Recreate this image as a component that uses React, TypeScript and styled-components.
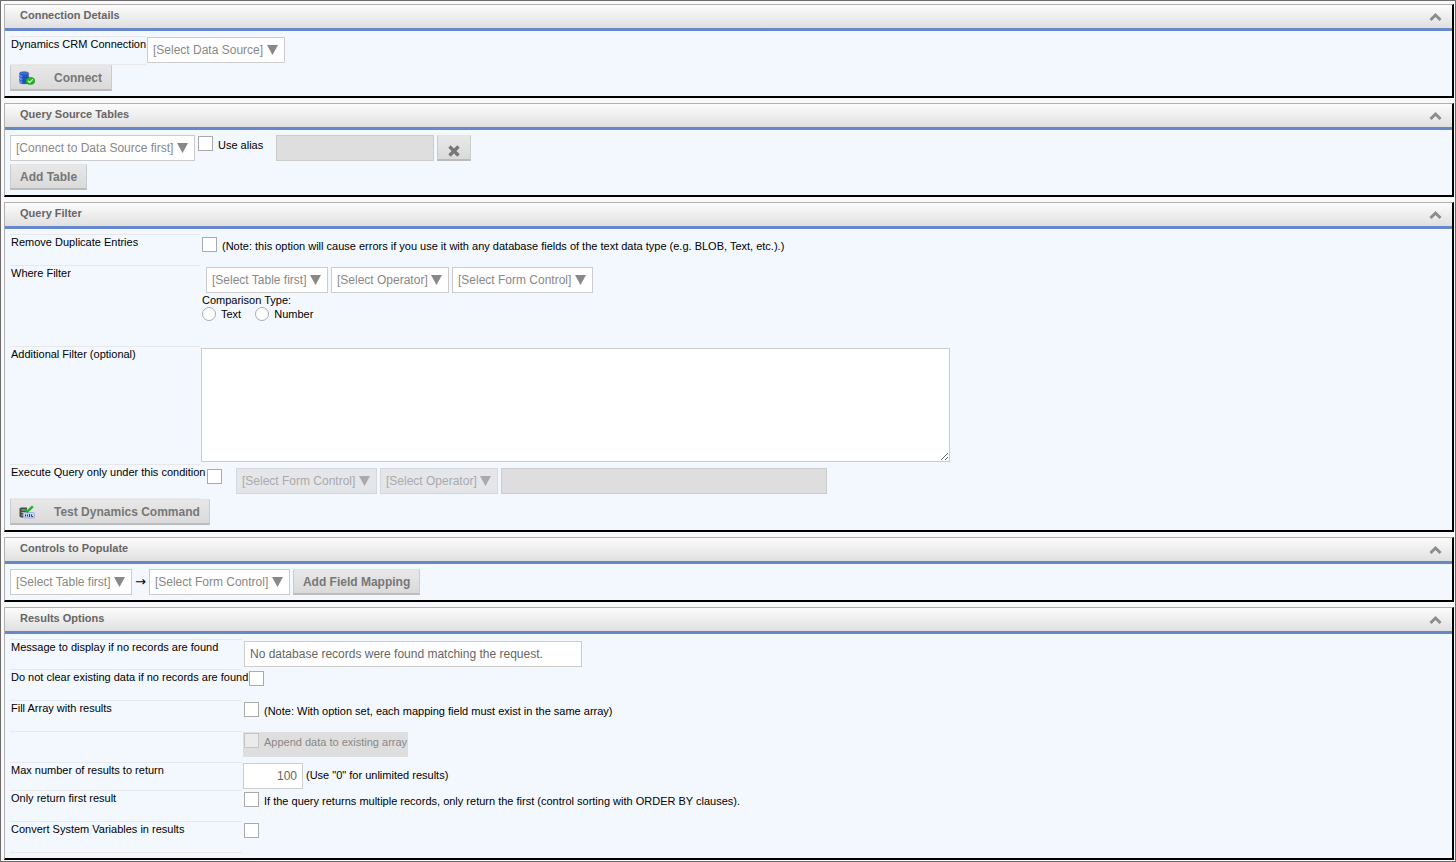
import React, { useState } from "react";
import styled, { createGlobalStyle, css } from "styled-components";

const GlobalStyle = createGlobalStyle`
  *, *::before, *::after { box-sizing: border-box; }
  body {
    margin: 0;
    background: #fafafa;
    color: #000;
    font-family: "Liberation Sans", Arial, Helvetica, sans-serif;
    font-size: 11px;
    line-height: 14px;
  }
`;

const Page = styled.main`
  display: flex;
  flex-direction: column;
  gap: 5px;
  padding: 3px 1px 1px 3px;
  border: 1px solid #6d6a6b;
  background: #fafafa;
`;

const PanelFrame = styled.section`
  border: 1px solid #b0b0b0;
  border-right: 2px solid #000;
  border-bottom: 2px solid #000;
  background: #f3f8ff;
`;

const PanelHeader = styled.header`
  display: flex;
  align-items: center;
  justify-content: space-between;
  height: 26px;
  padding: 0 10px 0 15px;
  border-bottom: 3px solid #6688c8;
  background: linear-gradient(#fcfcfc, #e0e0e0);
`;

const PanelTitle = styled.h2`
  margin: 0 0 3px;
  color: #666;
  font-size: 11px;
  font-weight: bold;
  line-height: 14px;
`;

const CollapseButton = styled.button`
  display: flex;
  margin: 0;
  padding: 0;
  border: 0;
  background: none;
  color: #8c8c8c;
  cursor: pointer;
`;

const PanelBody = styled.div`
  padding: 5px;
`;

const FieldGrid = styled.div<{ $labelWidth: number }>`
  display: grid;
  grid-template-columns: ${(p) => p.$labelWidth}px 1fr;
`;

const labelCell = css`
  padding-left: 1px;
  border-top: 1px solid #e8e8ea;
  white-space: nowrap;
`;

const FieldLabel = styled.label`
  ${labelCell}
`;

const FieldName = styled.div`
  ${labelCell}
`;

const ClosingLine = styled.div`
  border-top: 1px solid #e8e8ea;
`;

const FieldCell = styled.div<{ $height?: number; $inset?: number; $top?: number }>`
  display: flex;
  align-items: flex-start;
  gap: 3px;
  min-height: ${(p) => p.$height ?? 31}px;
  padding: ${(p) => p.$top ?? 2}px 0 0 ${(p) => p.$inset ?? 1}px;
`;

const WhereCell = styled.div`
  min-height: 81px;
  padding: 2px 0 0 2px;
`;

const ControlRow = styled.div<{ $indent?: number }>`
  display: flex;
  gap: 3px;
  padding-left: ${(p) => p.$indent ?? 0}px;
`;

const ButtonRow = styled.div<{ $gap?: number }>`
  display: flex;
  padding-top: ${(p) => p.$gap ?? 0}px;
`;

const SelectFrame = styled.span<{ $disabled?: boolean }>`
  position: relative;
  display: inline-flex;
  flex: none;
  color: ${(p) => (p.$disabled ? "#aaaaaa" : "#888888")};
`;

const SelectInput = styled.select`
  appearance: none;
  height: 26px;
  margin: 0;
  padding: 0 20px 0 5px;
  border: 1px solid #ccc;
  border-radius: 0;
  background: #fff;
  color: inherit;
  font-family: inherit;
  font-size: 12px;
  opacity: 1;

  &:disabled {
    border-color: #d5d8dc;
    background: #e4e6e9;
  }
`;

const SelectArrow = styled.svg`
  position: absolute;
  top: 8px;
  right: 7px;
  pointer-events: none;
`;

const textField = css`
  margin: 0;
  border: 1px solid #ccc;
  border-radius: 0;
  background: #fff;
  color: #666;
  font-family: inherit;
  font-size: 12px;
`;

const TextInput = styled.input<{ $width: number }>`
  ${textField}
  width: ${(p) => p.$width}px;
  max-width: 100%;
  height: 26px;
  padding: 0 5px;

  &:disabled { background: #dedede; }

  &[inputmode="numeric"] { text-align: right; }
`;

const FilterText = styled.textarea`
  ${textField}
  width: 749px;
  max-width: 100%;
  height: 114px;
  padding: 4px 5px;
  resize: both;
`;

const Tick = styled.input`
  appearance: none;
  flex: none;
  width: 15px;
  height: 15px;
  margin: 1px 0 0;
  border: 1px solid #aaa;
  background: #fff;

  &:checked { box-shadow: inset 0 0 0 3px #fff; background: #6688c8; }

  &:disabled { border-color: #c6c6c6; background: #ebebeb; }

  &[type="radio"] {
    width: 14px;
    height: 14px;
    border-radius: 50%;
    margin: 0;
  }
`;

const Hint = styled.label<{ $drop?: number }>`
  padding-top: ${(p) => p.$drop ?? 3}px;
  padding-left: 2px;
  white-space: nowrap;
`;

const AliasHint = styled(Hint)`
  padding-right: 10px;
`;

const InputHint = styled(Hint)`
  padding-left: 0;
`;

const TickGap = styled.span`
  display: flex;
  padding-right: 11px;
`;

const ComparisonSet = styled.fieldset`
  margin: 0;
  padding: 0;
  border: 0;
`;

const ComparisonTitle = styled.legend`
  padding: 0;
`;

const RadioRow = styled.div`
  display: flex;
  align-items: center;
  gap: 14px;
`;

const RadioLabel = styled.label`
  display: flex;
  align-items: center;
  gap: 5px;
`;

const DisabledStrip = styled.div`
  display: flex;
  gap: 3px;
  height: 25px;
  padding: 0 1px;
  background: #dedede;
  color: #888;
`;

const ActionButton = styled.button`
  display: flex;
  align-items: center;
  height: 26px;
  margin: 0;
  padding: 0 9px;
  border: 1px solid #ccc;
  border-top-color: #e4e4e4;
  border-bottom: 2px solid #bbb;
  background: linear-gradient(#e8e8e8, #dadada);
  color: #777;
  font-family: inherit;
  font-size: 12px;
  font-weight: bold;
  line-height: 14px;
  white-space: nowrap;
  cursor: pointer;
`;

const IconButton = styled(ActionButton)`
  gap: 19px;
  padding-left: 8px;
`;

const RemoveButton = styled(ActionButton)`
  padding: 7px 10px 0;
`;

const MapArrow = styled.span`
  padding: 6px 0;
  font-family: "DejaVu Sans", sans-serif;
  font-size: 13px;
`;

function Chevron({ down }: { down: boolean }) {
  return (
    <svg width="13" height="10" viewBox="0 0 13 10" aria-hidden="true">
      <path
        d={down ? "M1.5 2 6.5 7 11.5 2" : "M1.5 8 6.5 3 11.5 8"}
        fill="none"
        stroke="currentColor"
        strokeWidth="3"
      />
    </svg>
  );
}

function CrossIcon() {
  return (
    <svg width="12" height="12" viewBox="0 0 12 12" aria-hidden="true">
      <path d="M2.7 2.7 9.3 9.3M9.3 2.7 2.7 9.3" stroke="#777" strokeWidth="3.4" strokeLinecap="square" />
    </svg>
  );
}

function DatabaseIcon() {
  return (
    <svg width="16" height="16" viewBox="0 0 16 16" aria-hidden="true">
      <path d="M.5 3.5v9c0 1 2 1.7 4.6 1.7s4.6-.7 4.6-1.7v-9z" fill="#2457c4" />
      <path d="M1 3.7v9c.4.5 1.2.8 2.2 1v-9z" fill="#5b90ee" />
      <path d="M.5 6.3c0 1 2 1.6 4.6 1.6s4.6-.6 4.6-1.6M.5 9.5c0 1 2 1.6 4.6 1.6s4.6-.6 4.6-1.6" fill="none" stroke="#1a479f" strokeWidth=".7" />
      <ellipse cx="5.1" cy="3.5" rx="4.6" ry="1.8" fill="#3a6fd6" stroke="#1c46a6" strokeWidth=".6" />
      <ellipse cx="11.3" cy="10.9" rx="4.4" ry="3.4" fill="#25b825" stroke="#0d8f14" strokeWidth=".7" />
      <path d="M8.8 10.8 10.6 12.4 13.8 9.4" fill="none" stroke="#d9ffd2" strokeWidth="1.2" />
    </svg>
  );
}

function TestIcon() {
  return (
    <svg width="16" height="16" viewBox="0 0 16 16" aria-hidden="true">
      <path d="M.5 4.5 2 3.5h6v10H2L.5 12.5z" fill="#4b4b4b" />
      <path d="M2.5 6h4M2.5 8.5h3M2.5 11h3" stroke="#b5b5b5" />
      <rect x="4.5" y="8.5" width="11" height="5.5" rx="1" fill="#c3d0f2" stroke="#a3b3e0" />
      <path d="M6.5 12.5v-2M8.5 10.5v2M10.5 10v3M12.5 10.5v2h1.5" fill="none" stroke="#333a5c" />
      <path d="M6 5.3 8.3 7.6 13.8 2.4" fill="none" stroke="#14b81c" strokeWidth="2.4" />
    </svg>
  );
}

interface PickerProps {
  text: string;
  label: string;
  id?: string;
  disabled?: boolean;
}

function Picker({ text, label, id, disabled }: PickerProps) {
  return (
    <SelectFrame $disabled={disabled}>
      <SelectInput id={id} aria-label={label} disabled={disabled}>
        <option>{text}</option>
      </SelectInput>
      <SelectArrow width="11" height="10" viewBox="0 0 11 10" aria-hidden="true">
        <path d="M0 0h11L5.5 10z" fill="currentColor" />
      </SelectArrow>
    </SelectFrame>
  );
}

function Panel({ title, children }: { title: string; children: React.ReactNode }) {
  const [open, setOpen] = useState(true);
  return (
    <PanelFrame>
      <PanelHeader>
        <PanelTitle>{title}</PanelTitle>
        <CollapseButton
          type="button"
          aria-label={`Toggle ${title}`}
          aria-expanded={open}
          onClick={() => setOpen(!open)}
        >
          <Chevron down={!open} />
        </CollapseButton>
      </PanelHeader>
      {open && <PanelBody>{children}</PanelBody>}
    </PanelFrame>
  );
}

export default function App() {
  return (
    <>
      <GlobalStyle />
      <Page>
        <Panel title="Connection Details">
          <FieldGrid $labelWidth={136}>
            <FieldLabel htmlFor="connection">Dynamics CRM Connection</FieldLabel>
            <FieldCell $height={28} $top={1}>
              <Picker id="connection" label="Dynamics CRM Connection" text="[Select Data Source]" />
            </FieldCell>
            <ClosingLine />
          </FieldGrid>
          <ButtonRow>
            <IconButton type="button">
              <DatabaseIcon />
              Connect
            </IconButton>
          </ButtonRow>
        </Panel>

        <Panel title="Query Source Tables">
          <ControlRow>
            <Picker label="Source table" text="[Connect to Data Source first]" />
            <Tick type="checkbox" id="use-alias" />
            <AliasHint htmlFor="use-alias">Use alias</AliasHint>
            <TextInput $width={158} aria-label="Alias" disabled />
            <RemoveButton type="button" aria-label="Remove table">
              <CrossIcon />
            </RemoveButton>
          </ControlRow>
          <ButtonRow $gap={3}>
            <ActionButton type="button">Add Table</ActionButton>
          </ButtonRow>
        </Panel>

        <Panel title="Query Filter">
          <FieldGrid $labelWidth={190}>
            <FieldLabel htmlFor="dedupe">Remove Duplicate Entries</FieldLabel>
            <FieldCell $inset={2}>
              <Tick type="checkbox" id="dedupe" />
              <Hint htmlFor="dedupe">
                (Note: this option will cause errors if you use it with any database fields of the text data type (e.g. BLOB, Text, etc.).)
              </Hint>
            </FieldCell>

            <FieldName>Where Filter</FieldName>
            <WhereCell>
              <ControlRow $indent={4}>
                <Picker label="Filter table" text="[Select Table first]" />
                <Picker label="Filter operator" text="[Select Operator]" />
                <Picker label="Filter form control" text="[Select Form Control]" />
              </ControlRow>
              <ComparisonSet>
                <ComparisonTitle>Comparison Type:</ComparisonTitle>
                <RadioRow>
                  <RadioLabel>
                    <Tick type="radio" name="comparison" />
                    Text
                  </RadioLabel>
                  <RadioLabel>
                    <Tick type="radio" name="comparison" />
                    Number
                  </RadioLabel>
                </RadioRow>
              </ComparisonSet>
            </WhereCell>

            <FieldLabel htmlFor="additional">Additional Filter (optional)</FieldLabel>
            <FieldCell $height={118}>
              <FilterText id="additional" />
            </FieldCell>

            <FieldLabel htmlFor="conditional">Execute Query only under this condition</FieldLabel>
            <FieldCell $height={34} $inset={7} $top={4}>
              <TickGap>
                <Tick type="checkbox" id="conditional" />
              </TickGap>
              <Picker label="Condition form control" text="[Select Form Control]" disabled />
              <Picker label="Condition operator" text="[Select Operator]" disabled />
              <TextInput $width={326} aria-label="Condition value" disabled />
            </FieldCell>
            <ClosingLine />
          </FieldGrid>
          <ButtonRow>
            <IconButton type="button">
              <TestIcon />
              Test Dynamics Command
            </IconButton>
          </ButtonRow>
        </Panel>

        <Panel title="Controls to Populate">
          <ControlRow>
            <Picker label="Mapping table" text="[Select Table first]" />
            <MapArrow>→</MapArrow>
            <Picker label="Mapping form control" text="[Select Form Control]" />
            <ActionButton type="button">Add Field Mapping</ActionButton>
          </ControlRow>
        </Panel>

        <Panel title="Results Options">
          <FieldGrid $labelWidth={232}>
            <FieldLabel htmlFor="empty-message">Message to display if no records are found</FieldLabel>
            <FieldCell $height={30} $inset={2}>
              <TextInput
                $width={338}
                id="empty-message"
                defaultValue="No database records were found matching the request."
              />
            </FieldCell>

            <FieldLabel htmlFor="keep-data">Do not clear existing data if no records are found</FieldLabel>
            <FieldCell $inset={7} $top={1}>
              <Tick type="checkbox" id="keep-data" />
            </FieldCell>

            <FieldLabel htmlFor="fill-array">Fill Array with results</FieldLabel>
            <FieldCell $inset={2} $top={1}>
              <Tick type="checkbox" id="fill-array" />
              <Hint htmlFor="fill-array">
                (Note: With option set, each mapping field must exist in the same array)
              </Hint>
            </FieldCell>

            <FieldName />
            <FieldCell $top={1}>
              <DisabledStrip>
                <Tick type="checkbox" id="append" disabled />
                <Hint htmlFor="append">Append data to existing array</Hint>
              </DisabledStrip>
            </FieldCell>

            <FieldLabel htmlFor="max-results">Max number of results to return</FieldLabel>
            <FieldCell $height={28} $top={1}>
              <TextInput $width={60} id="max-results" inputMode="numeric" defaultValue="100" />
              <InputHint htmlFor="max-results" $drop={5}>(Use "0" for unlimited results)</InputHint>
            </FieldCell>

            <FieldLabel htmlFor="first-only">Only return first result</FieldLabel>
            <FieldCell $inset={2} $top={1}>
              <Tick type="checkbox" id="first-only" />
              <Hint htmlFor="first-only">
                If the query returns multiple records, only return the first (control sorting with ORDER BY clauses).
              </Hint>
            </FieldCell>

            <FieldLabel htmlFor="convert">Convert System Variables in results</FieldLabel>
            <FieldCell $inset={2} $top={1}>
              <Tick type="checkbox" id="convert" />
            </FieldCell>
            <ClosingLine />
          </FieldGrid>
        </Panel>
      </Page>
    </>
  );
}
